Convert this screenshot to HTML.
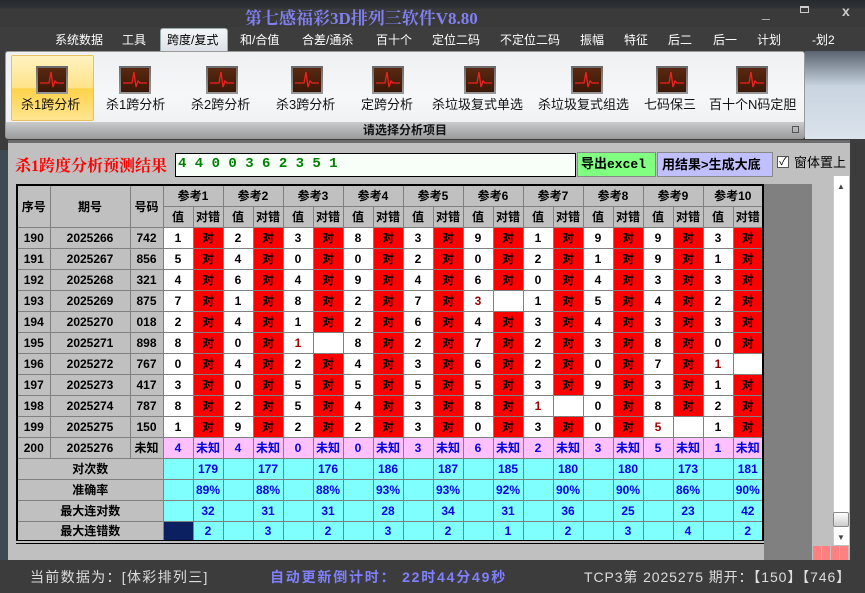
<!DOCTYPE html>
<html><head><meta charset="utf-8">
<style>
*{margin:0;padding:0;box-sizing:border-box}
body{width:865px;height:593px;overflow:hidden;background:#3c3c3c;font-family:"Liberation Sans","Noto Sans CJK SC",sans-serif;position:relative}
.abs{position:absolute}
#top{left:0;top:0;width:865px;height:27px;background:linear-gradient(#26292e 0,#2f3236 8px,#3a3a3a 9px,#3a3a3a)}
#title{left:245px;top:4px;color:#8080f0;font:bold 17px "Liberation Serif","Noto Serif CJK SC",serif;white-space:nowrap}
#menu{left:0;top:27px;width:865px;height:24px;background:#3d3d3d}
.mi{position:absolute;top:31px;color:#fff;font-size:12px;white-space:nowrap}
#tab{left:160px;top:28px;width:68px;height:23px;background:linear-gradient(#f4f6f8,#dde2e8);border:1px solid #9aa;border-bottom:none;border-radius:3px 3px 0 0}
#rib{left:5px;top:51px;width:800px;height:88px;background:linear-gradient(#eef0f2,#f6f7f8 50%,#eceef0);border:1px solid #999;border-radius:3px}
#ribr{left:805px;top:51px;width:60px;height:88px;background:linear-gradient(#5a6470,#c8d4e0 40%,#dbe3ec)}
#ribbot{left:6px;top:122px;width:798px;height:16px;background:linear-gradient(#c8cacc,#9a9c9e);font:bold 12px "Liberation Sans","Noto Sans CJK SC",sans-serif;text-align:center;line-height:16px;color:#111}
#sel{left:11px;top:55px;width:83px;height:66px;background:linear-gradient(#fff3c0,#ffe38a 50%,#ffd24a 51%,#ffe590);border:1px solid #e8c060;border-radius:2px}
.ic{position:absolute;top:66px;width:32px;height:28px;background:linear-gradient(#6a6a6a,#999);padding:2px}
.ic div{width:100%;height:100%;background:linear-gradient(#5a2810,#3a1808)}
.ic svg{position:absolute;left:2px;top:2px}
.lb{position:absolute;top:94px;font-size:13px;color:#111;white-space:nowrap}
#panel{left:8px;top:140px;width:842px;height:420px;background:#c0c0c0;border-top:3px solid #6b6b6b}
#lstrip{left:0;top:150px;width:8px;height:410px;background:#3d4a52}
#res{left:15px;top:153px;color:#f00;font:bold 16px "Liberation Serif","Noto Serif CJK SC",serif}
#inp{left:175px;top:153px;width:401px;height:24px;background:#f8fff8;border:1px solid #000;color:#008000;font:bold 14px "Liberation Mono",monospace;padding:2px 2px}
#b1{left:577px;top:152px;width:79px;height:25px;background:#80ff80;border:1px solid #888;font:bold 13px "Liberation Mono","Noto Sans CJK SC",monospace;line-height:23px;padding-left:3px;color:#000}
#b2{left:657px;top:152px;width:116px;height:25px;background:#c0c0ff;border:1px solid #888;font:bold 13px "Liberation Sans","Noto Sans CJK SC",sans-serif;line-height:23px;padding-left:4px;color:#000}
#chk{left:777px;top:156px;width:12px;height:12px;background:#fff;border:1px solid #555;font-size:11px;line-height:10px;text-align:center}
#chkl{left:794px;top:152px;font-size:13px;color:#000}
#gray{left:764px;top:184px;width:48px;height:376px;background:#808080}
#sb{left:812px;top:176px;width:38px;height:370px;background:#c0c0c0}
#sbt{left:833px;top:176px;width:16px;height:369px;background:#fff;border-left:1px solid #ccc}
#thumb{left:833px;top:512px;width:16px;height:15px;background:linear-gradient(#fff,#ccc);border:1px solid #888;border-radius:2px}
.red{position:absolute;top:546px;width:8px;height:14px;background:#ff8080}
table{position:absolute;left:16px;top:184px;border-collapse:collapse;table-layout:fixed;border:2px solid #000;border-bottom:4px double #000;font-weight:bold;font-size:12px;text-align:center}
td{border:1px solid #808080;height:21px;padding:0;overflow:hidden;white-space:nowrap}
.h{background:#c0c0c0;color:#000}
.v{background:#fff;color:#000}
.r{background:#f00;color:#000}
.m{background:#fff;color:#900}
.u{background:#ffc0ff;color:#0000e0}
.c{background:#80ffff;color:#0000e0}
.n{background:#0a2060}
#stat{left:0;top:560px;width:865px;height:33px;background:#3c3c3c}
.st{position:absolute;top:567px;font-size:14px;white-space:nowrap}
</style></head><body>
<div class="abs" id="top"></div>
<div class="abs" id="title">第七感福彩3D排列三软件V8.80</div>
<div class="abs" style="left:762px;top:4px;color:#bbb;font-size:14px">_</div>
<div class="abs" style="left:800px;top:6px;width:9px;height:7px;border:1px solid #ccc;border-top-width:2px"></div>
<div class="abs" style="left:842px;top:3px;color:#ccc;font-size:14px;font-weight:bold">x</div>
<div class="abs" id="menu"></div>
<div class="abs" id="tab"></div>
<div class="mi" style="left:55px">系统数据</div>
<div class="mi" style="left:122px">工具</div>
<div class="mi" style="left:167px;color:#000">跨度/复式</div>
<div class="mi" style="left:240px">和/合值</div>
<div class="mi" style="left:302px">合差/通杀</div>
<div class="mi" style="left:376px">百十个</div>
<div class="mi" style="left:432px">定位二码</div>
<div class="mi" style="left:500px">不定位二码</div>
<div class="mi" style="left:580px">振幅</div>
<div class="mi" style="left:624px">特征</div>
<div class="mi" style="left:668px">后二</div>
<div class="mi" style="left:713px">后一</div>
<div class="mi" style="left:757px">计划</div>
<div class="mi" style="left:812px">-划2</div>
<div class="abs" id="rib"></div>
<div class="abs" id="ribr"></div>
<div class="abs" id="sel"></div>
<div class="abs" id="ribbot">请选择分析项目</div>
<div class="abs" style="left:792px;top:126px;width:7px;height:7px;border:1px solid #555"></div>

<div class="ic" style="left:36px"><div></div><svg width="28" height="24"><path d="M2 15 H11 L13 4 L15 19 L17 13 L19 15 H26" stroke="#f02020" stroke-width="1.3" fill="none"/></svg></div>
<div class="ic" style="left:119px"><div></div><svg width="28" height="24"><path d="M2 15 H11 L13 4 L15 19 L17 13 L19 15 H26" stroke="#f02020" stroke-width="1.3" fill="none"/></svg></div>
<div class="ic" style="left:206px"><div></div><svg width="28" height="24"><path d="M2 15 H11 L13 4 L15 19 L17 13 L19 15 H26" stroke="#f02020" stroke-width="1.3" fill="none"/></svg></div>
<div class="ic" style="left:291px"><div></div><svg width="28" height="24"><path d="M2 15 H11 L13 4 L15 19 L17 13 L19 15 H26" stroke="#f02020" stroke-width="1.3" fill="none"/></svg></div>
<div class="ic" style="left:372px"><div></div><svg width="28" height="24"><path d="M2 15 H11 L13 4 L15 19 L17 13 L19 15 H26" stroke="#f02020" stroke-width="1.3" fill="none"/></svg></div>
<div class="ic" style="left:464px"><div></div><svg width="28" height="24"><path d="M2 15 H11 L13 4 L15 19 L17 13 L19 15 H26" stroke="#f02020" stroke-width="1.3" fill="none"/></svg></div>
<div class="ic" style="left:571px"><div></div><svg width="28" height="24"><path d="M2 15 H11 L13 4 L15 19 L17 13 L19 15 H26" stroke="#f02020" stroke-width="1.3" fill="none"/></svg></div>
<div class="ic" style="left:656px"><div></div><svg width="28" height="24"><path d="M2 15 H11 L13 4 L15 19 L17 13 L19 15 H26" stroke="#f02020" stroke-width="1.3" fill="none"/></svg></div>
<div class="ic" style="left:736px"><div></div><svg width="28" height="24"><path d="M2 15 H11 L13 4 L15 19 L17 13 L19 15 H26" stroke="#f02020" stroke-width="1.3" fill="none"/></svg></div>
<div class="lb" style="left:21px">杀1跨分析</div>
<div class="lb" style="left:106px">杀1跨分析</div>
<div class="lb" style="left:191px">杀2跨分析</div>
<div class="lb" style="left:276px">杀3跨分析</div>
<div class="lb" style="left:361px">定跨分析</div>
<div class="lb" style="left:432px">杀垃圾复式单选</div>
<div class="lb" style="left:538px">杀垃圾复式组选</div>
<div class="lb" style="left:644px">七码保三</div>
<div class="lb" style="left:709px">百十个N码定胆</div>

<div class="abs" id="panel"></div>
<div class="abs" id="lstrip"></div>
<div class="abs" id="res">杀1跨度分析预测结果</div>
<div class="abs" id="inp">4 4 0 0 3 6 2 3 5 1</div>
<div class="abs" id="b1">导出excel</div>
<div class="abs" id="b2">用结果&gt;生成大底</div>
<div class="abs" id="chk">✓</div>
<div class="abs" id="chkl">窗体置上</div>
<div class="abs" id="gray"></div>
<div class="abs" id="sb"></div>
<div class="abs" id="sbt"></div>
<div class="abs" style="left:837px;top:182px;font-size:8px;color:#444">▲</div>
<div class="abs" id="thumb"></div>
<div class="abs" style="left:837px;top:533px;font-size:8px;color:#444">▼</div>
<div class="red" style="left:813px"></div><div class="red" style="left:822px"></div><div class="red" style="left:831px"></div><div class="red" style="left:840px"></div>

<table>
<colgroup><col style="width:33px"><col style="width:80px"><col style="width:33px">
<col style="width:30px"><col style="width:30px"><col style="width:30px"><col style="width:30px"><col style="width:30px"><col style="width:30px"><col style="width:30px"><col style="width:30px"><col style="width:30px"><col style="width:30px"><col style="width:30px"><col style="width:30px"><col style="width:30px"><col style="width:30px"><col style="width:30px"><col style="width:30px"><col style="width:30px"><col style="width:30px"><col style="width:30px"><col style="width:30px"></colgroup>
<tr class="h"><td rowspan="2" class="h">序号</td><td rowspan="2" class="h">期号</td><td rowspan="2" class="h">号码</td><td colspan="2" class="h">参考1</td><td colspan="2" class="h">参考2</td><td colspan="2" class="h">参考3</td><td colspan="2" class="h">参考4</td><td colspan="2" class="h">参考5</td><td colspan="2" class="h">参考6</td><td colspan="2" class="h">参考7</td><td colspan="2" class="h">参考8</td><td colspan="2" class="h">参考9</td><td colspan="2" class="h">参考10</td></tr>
<tr class="h"><td>值</td><td>对错</td><td>值</td><td>对错</td><td>值</td><td>对错</td><td>值</td><td>对错</td><td>值</td><td>对错</td><td>值</td><td>对错</td><td>值</td><td>对错</td><td>值</td><td>对错</td><td>值</td><td>对错</td><td>值</td><td>对错</td></tr>
<tr><td class="h">190</td><td class="h">2025266</td><td class="h">742</td><td class="v">1</td><td class="r">对</td><td class="v">2</td><td class="r">对</td><td class="v">3</td><td class="r">对</td><td class="v">8</td><td class="r">对</td><td class="v">3</td><td class="r">对</td><td class="v">9</td><td class="r">对</td><td class="v">1</td><td class="r">对</td><td class="v">9</td><td class="r">对</td><td class="v">9</td><td class="r">对</td><td class="v">3</td><td class="r">对</td></tr>
<tr><td class="h">191</td><td class="h">2025267</td><td class="h">856</td><td class="v">5</td><td class="r">对</td><td class="v">4</td><td class="r">对</td><td class="v">0</td><td class="r">对</td><td class="v">0</td><td class="r">对</td><td class="v">2</td><td class="r">对</td><td class="v">0</td><td class="r">对</td><td class="v">2</td><td class="r">对</td><td class="v">1</td><td class="r">对</td><td class="v">9</td><td class="r">对</td><td class="v">1</td><td class="r">对</td></tr>
<tr><td class="h">192</td><td class="h">2025268</td><td class="h">321</td><td class="v">4</td><td class="r">对</td><td class="v">6</td><td class="r">对</td><td class="v">4</td><td class="r">对</td><td class="v">9</td><td class="r">对</td><td class="v">4</td><td class="r">对</td><td class="v">6</td><td class="r">对</td><td class="v">0</td><td class="r">对</td><td class="v">4</td><td class="r">对</td><td class="v">3</td><td class="r">对</td><td class="v">3</td><td class="r">对</td></tr>
<tr><td class="h">193</td><td class="h">2025269</td><td class="h">875</td><td class="v">7</td><td class="r">对</td><td class="v">1</td><td class="r">对</td><td class="v">8</td><td class="r">对</td><td class="v">2</td><td class="r">对</td><td class="v">7</td><td class="r">对</td><td class="m">3</td><td class="v"></td><td class="v">1</td><td class="r">对</td><td class="v">5</td><td class="r">对</td><td class="v">4</td><td class="r">对</td><td class="v">2</td><td class="r">对</td></tr>
<tr><td class="h">194</td><td class="h">2025270</td><td class="h">018</td><td class="v">2</td><td class="r">对</td><td class="v">4</td><td class="r">对</td><td class="v">1</td><td class="r">对</td><td class="v">2</td><td class="r">对</td><td class="v">6</td><td class="r">对</td><td class="v">4</td><td class="r">对</td><td class="v">3</td><td class="r">对</td><td class="v">4</td><td class="r">对</td><td class="v">3</td><td class="r">对</td><td class="v">3</td><td class="r">对</td></tr>
<tr><td class="h">195</td><td class="h">2025271</td><td class="h">898</td><td class="v">8</td><td class="r">对</td><td class="v">0</td><td class="r">对</td><td class="m">1</td><td class="v"></td><td class="v">8</td><td class="r">对</td><td class="v">2</td><td class="r">对</td><td class="v">7</td><td class="r">对</td><td class="v">2</td><td class="r">对</td><td class="v">3</td><td class="r">对</td><td class="v">8</td><td class="r">对</td><td class="v">0</td><td class="r">对</td></tr>
<tr><td class="h">196</td><td class="h">2025272</td><td class="h">767</td><td class="v">0</td><td class="r">对</td><td class="v">4</td><td class="r">对</td><td class="v">2</td><td class="r">对</td><td class="v">4</td><td class="r">对</td><td class="v">3</td><td class="r">对</td><td class="v">6</td><td class="r">对</td><td class="v">2</td><td class="r">对</td><td class="v">0</td><td class="r">对</td><td class="v">7</td><td class="r">对</td><td class="m">1</td><td class="v"></td></tr>
<tr><td class="h">197</td><td class="h">2025273</td><td class="h">417</td><td class="v">3</td><td class="r">对</td><td class="v">0</td><td class="r">对</td><td class="v">5</td><td class="r">对</td><td class="v">5</td><td class="r">对</td><td class="v">5</td><td class="r">对</td><td class="v">5</td><td class="r">对</td><td class="v">3</td><td class="r">对</td><td class="v">9</td><td class="r">对</td><td class="v">3</td><td class="r">对</td><td class="v">1</td><td class="r">对</td></tr>
<tr><td class="h">198</td><td class="h">2025274</td><td class="h">787</td><td class="v">8</td><td class="r">对</td><td class="v">2</td><td class="r">对</td><td class="v">5</td><td class="r">对</td><td class="v">4</td><td class="r">对</td><td class="v">3</td><td class="r">对</td><td class="v">8</td><td class="r">对</td><td class="m">1</td><td class="v"></td><td class="v">0</td><td class="r">对</td><td class="v">8</td><td class="r">对</td><td class="v">2</td><td class="r">对</td></tr>
<tr><td class="h">199</td><td class="h">2025275</td><td class="h">150</td><td class="v">1</td><td class="r">对</td><td class="v">9</td><td class="r">对</td><td class="v">2</td><td class="r">对</td><td class="v">2</td><td class="r">对</td><td class="v">3</td><td class="r">对</td><td class="v">0</td><td class="r">对</td><td class="v">3</td><td class="r">对</td><td class="v">0</td><td class="r">对</td><td class="m">5</td><td class="v"></td><td class="v">1</td><td class="r">对</td></tr>
<tr><td class="h">200</td><td class="h">2025276</td><td class="h">未知</td><td class="u">4</td><td class="u">未知</td><td class="u">4</td><td class="u">未知</td><td class="u">0</td><td class="u">未知</td><td class="u">0</td><td class="u">未知</td><td class="u">3</td><td class="u">未知</td><td class="u">6</td><td class="u">未知</td><td class="u">2</td><td class="u">未知</td><td class="u">3</td><td class="u">未知</td><td class="u">5</td><td class="u">未知</td><td class="u">1</td><td class="u">未知</td></tr>
<tr><td colspan="3" class="h">对次数</td><td class="c"></td><td class="c">179</td><td class="c"></td><td class="c">177</td><td class="c"></td><td class="c">176</td><td class="c"></td><td class="c">186</td><td class="c"></td><td class="c">187</td><td class="c"></td><td class="c">185</td><td class="c"></td><td class="c">180</td><td class="c"></td><td class="c">180</td><td class="c"></td><td class="c">173</td><td class="c"></td><td class="c">181</td></tr>
<tr><td colspan="3" class="h">准确率</td><td class="c"></td><td class="c">89%</td><td class="c"></td><td class="c">88%</td><td class="c"></td><td class="c">88%</td><td class="c"></td><td class="c">93%</td><td class="c"></td><td class="c">93%</td><td class="c"></td><td class="c">92%</td><td class="c"></td><td class="c">90%</td><td class="c"></td><td class="c">90%</td><td class="c"></td><td class="c">86%</td><td class="c"></td><td class="c">90%</td></tr>
<tr><td colspan="3" class="h">最大连对数</td><td class="c"></td><td class="c">32</td><td class="c"></td><td class="c">31</td><td class="c"></td><td class="c">31</td><td class="c"></td><td class="c">28</td><td class="c"></td><td class="c">34</td><td class="c"></td><td class="c">31</td><td class="c"></td><td class="c">36</td><td class="c"></td><td class="c">25</td><td class="c"></td><td class="c">23</td><td class="c"></td><td class="c">42</td></tr>
<tr><td colspan="3" class="h">最大连错数</td><td class="n"></td><td class="c">2</td><td class="c"></td><td class="c">3</td><td class="c"></td><td class="c">2</td><td class="c"></td><td class="c">3</td><td class="c"></td><td class="c">2</td><td class="c"></td><td class="c">1</td><td class="c"></td><td class="c">2</td><td class="c"></td><td class="c">3</td><td class="c"></td><td class="c">4</td><td class="c"></td><td class="c">2</td></tr>
</table>

<div class="abs" id="stat"></div>
<div class="st" style="left:30px;color:#ddd;letter-spacing:1.3px">当前数据为：[体彩排列三]</div>
<div class="st" style="left:270px;color:#8080ff;font-weight:bold;letter-spacing:1.8px">自动更新倒计时： 22时44分49秒</div>
<div class="st" style="left:584px;color:#ddd;letter-spacing:0.9px">TCP3第 2025275 期开：【150】【746】</div>
</body></html>
